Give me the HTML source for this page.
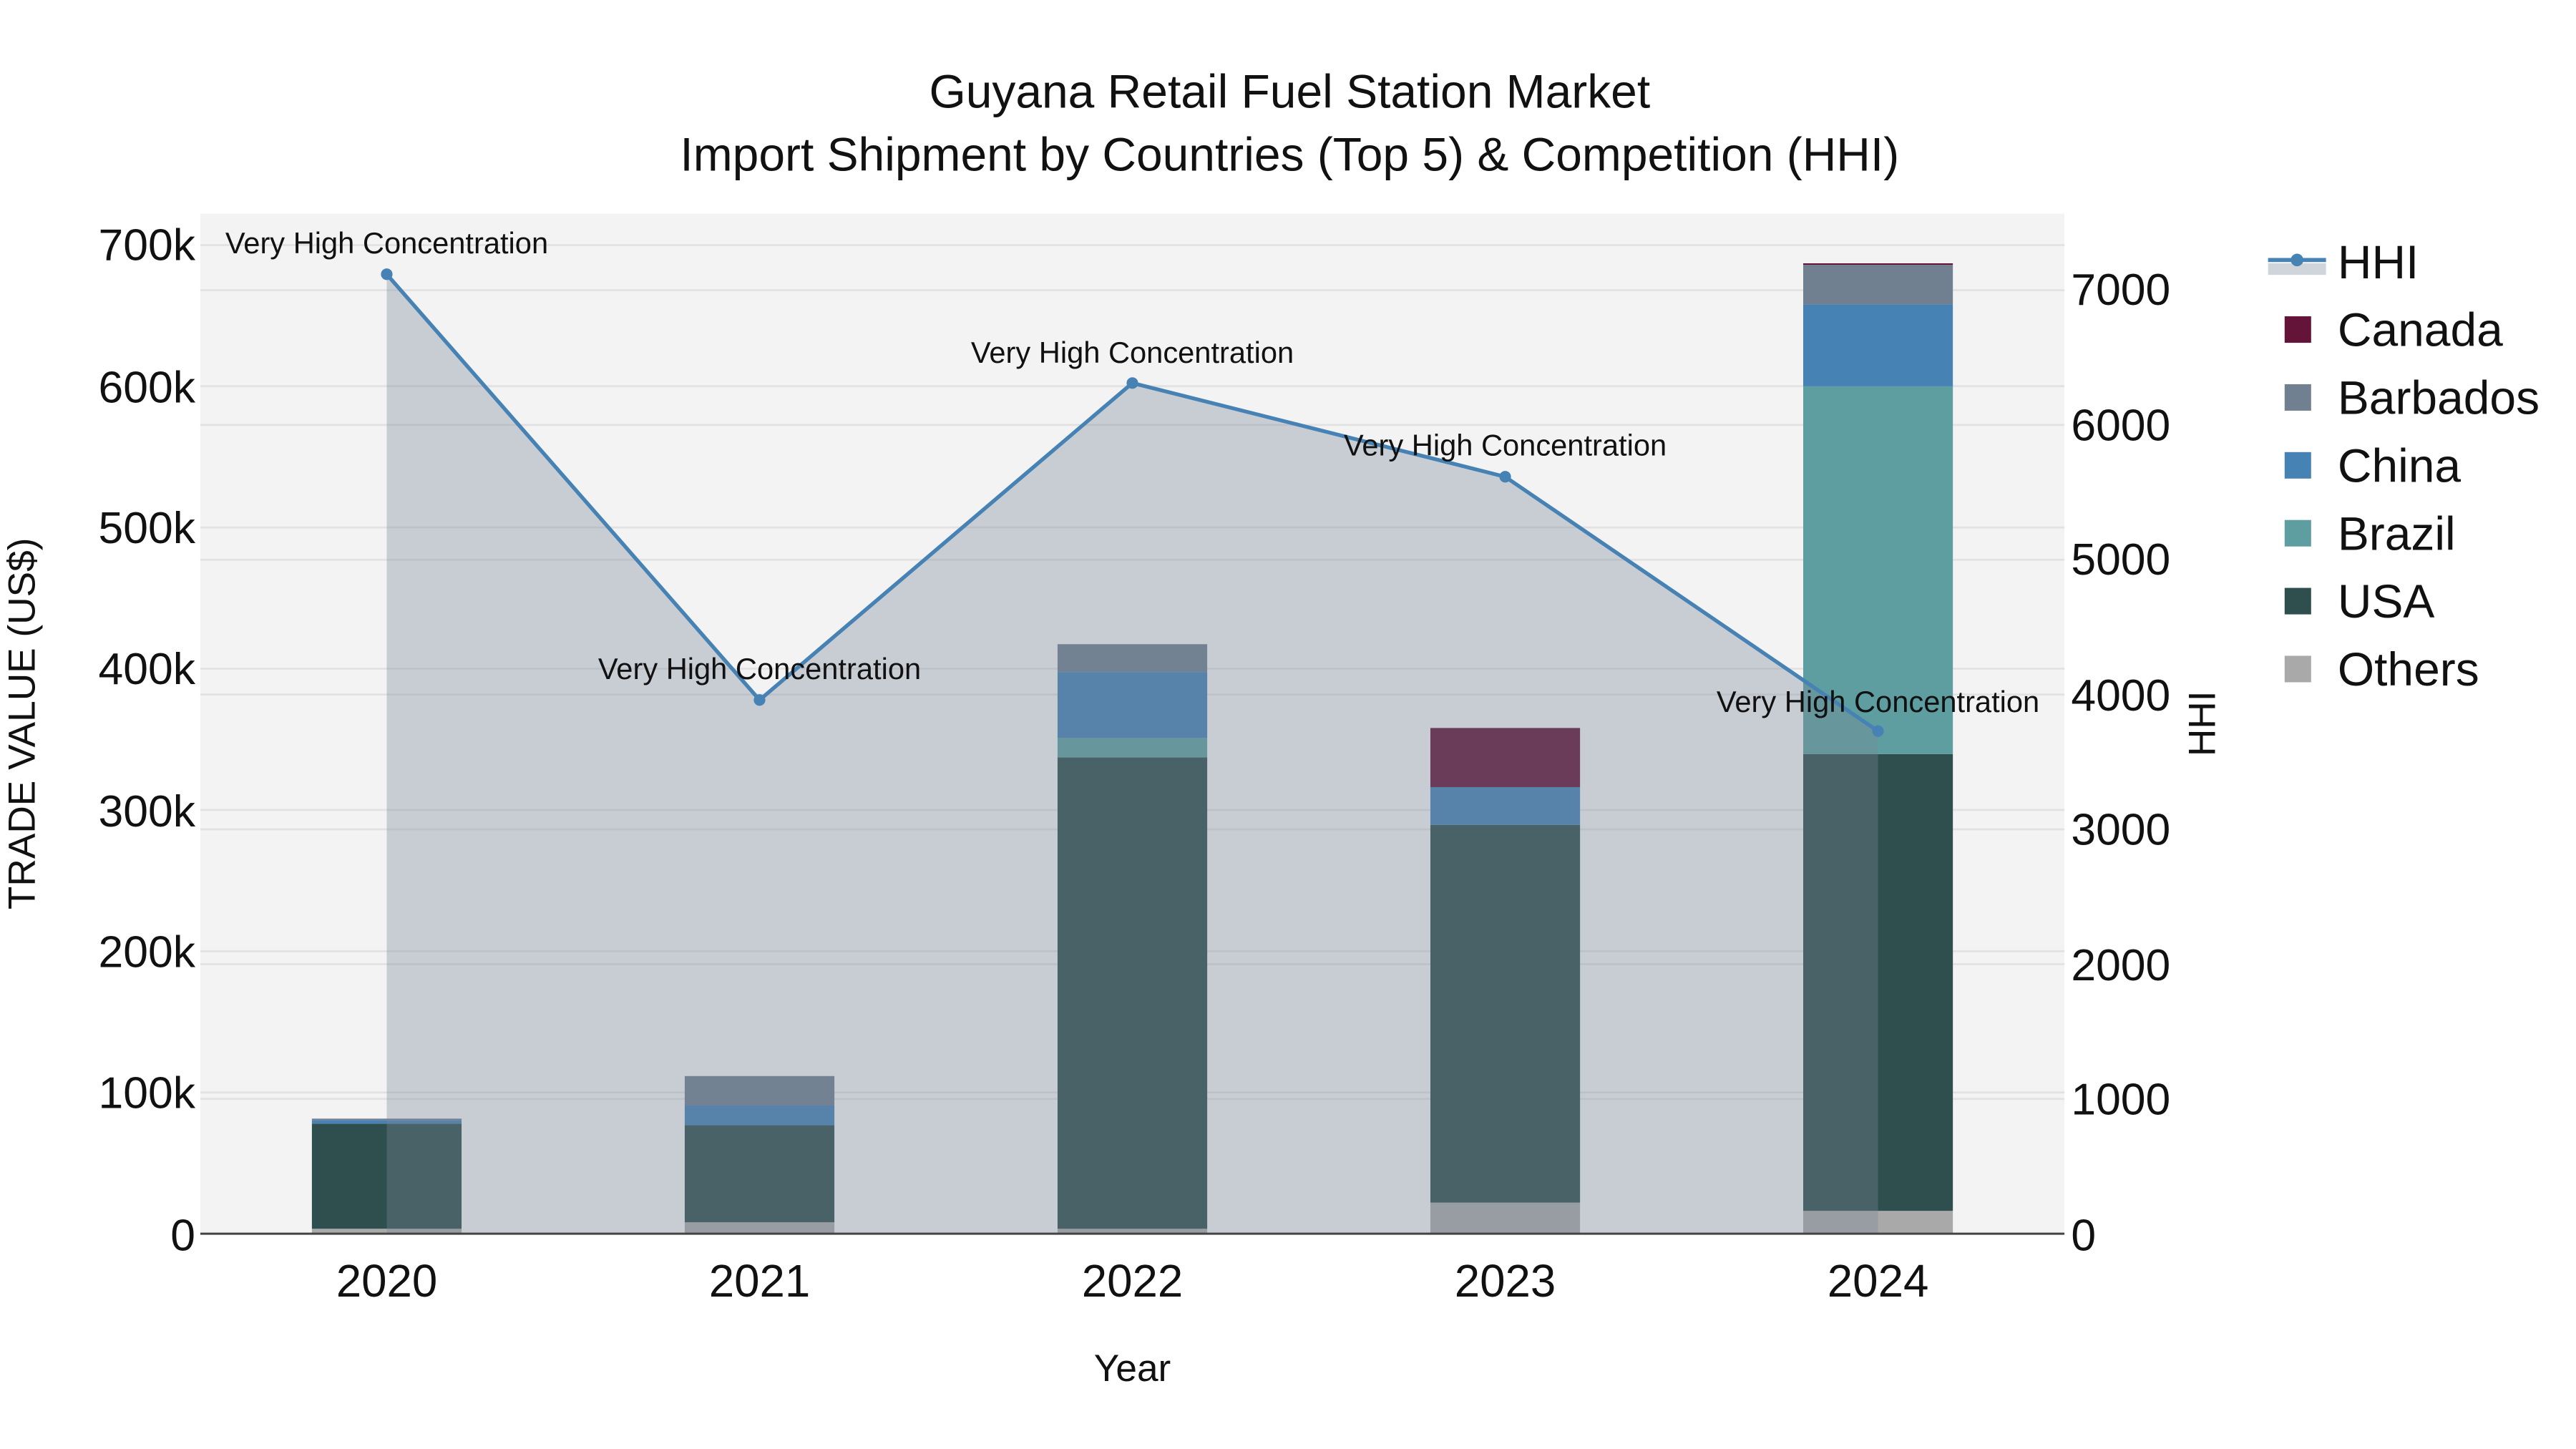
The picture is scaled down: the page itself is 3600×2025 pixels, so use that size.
<!DOCTYPE html>
<html><head><meta charset="utf-8"><style>
html,body{margin:0;padding:0;background:#fff;}
svg{display:block;}
text{font-family:"Liberation Sans",Arial,sans-serif;fill:#111;}
</style></head><body>
<svg width="3600" height="2025" viewBox="0 0 1556 875" preserveAspectRatio="none" xmlns="http://www.w3.org/2000/svg">
<rect x="0" y="0" width="1556" height="875" fill="#fff"/>
<rect x="121" y="129" width="1126" height="616" fill="#f3f3f3"/>
<g stroke="#e2e2e2" stroke-width="1.2">
<line x1="121" x2="1247" y1="659.7" y2="659.7"/><line x1="121" x2="1247" y1="574.4" y2="574.4"/>
<line x1="121" x2="1247" y1="489.1" y2="489.1"/><line x1="121" x2="1247" y1="403.8" y2="403.8"/>
<line x1="121" x2="1247" y1="318.5" y2="318.5"/><line x1="121" x2="1247" y1="233.2" y2="233.2"/>
<line x1="121" x2="1247" y1="148" y2="148"/>
<line x1="121" x2="1247" y1="663.6" y2="663.6"/><line x1="121" x2="1247" y1="582.2" y2="582.2"/>
<line x1="121" x2="1247" y1="500.8" y2="500.8"/><line x1="121" x2="1247" y1="419.4" y2="419.4"/>
<line x1="121" x2="1247" y1="338" y2="338"/><line x1="121" x2="1247" y1="256.6" y2="256.6"/>
<line x1="121" x2="1247" y1="175.2" y2="175.2"/>
</g>
<g>
<rect x="188.4" y="742" width="90.4" height="3" fill="#a9a9a9"/>
<rect x="188.4" y="678.5" width="90.4" height="63.5" fill="#2f4f4f"/>
<rect x="188.4" y="676.5" width="90.4" height="2" fill="#4682b4"/>
<rect x="188.4" y="675.5" width="90.4" height="1" fill="#708090"/>
<rect x="413.6" y="738.1" width="90.4" height="6.9" fill="#a9a9a9"/>
<rect x="413.6" y="679.5" width="90.4" height="58.6" fill="#2f4f4f"/>
<rect x="413.6" y="667.6" width="90.4" height="11.9" fill="#4682b4"/>
<rect x="413.6" y="649.8" width="90.4" height="17.8" fill="#708090"/>
<rect x="638.8" y="742" width="90.4" height="3" fill="#a9a9a9"/>
<rect x="638.8" y="457.4" width="90.4" height="284.6" fill="#2f4f4f"/>
<rect x="638.8" y="445.5" width="90.4" height="11.9" fill="#5f9ea0"/>
<rect x="638.8" y="405.8" width="90.4" height="39.7" fill="#4682b4"/>
<rect x="638.8" y="389" width="90.4" height="16.8" fill="#708090"/>
<rect x="864" y="726.2" width="90.4" height="18.8" fill="#a9a9a9"/>
<rect x="864" y="498.1" width="90.4" height="228.1" fill="#2f4f4f"/>
<rect x="864" y="475.3" width="90.4" height="22.8" fill="#4682b4"/>
<rect x="864" y="439.6" width="90.4" height="35.7" fill="#641438"/>
<rect x="1089.2" y="731.2" width="90.4" height="13.8" fill="#a9a9a9"/>
<rect x="1089.2" y="455.4" width="90.4" height="275.8" fill="#2f4f4f"/>
<rect x="1089.2" y="233.3" width="90.4" height="222.1" fill="#5f9ea0"/>
<rect x="1089.2" y="183.7" width="90.4" height="49.6" fill="#4682b4"/>
<rect x="1089.2" y="159.9" width="90.4" height="23.8" fill="#708090"/>
<rect x="1089.2" y="159" width="90.4" height="0.9" fill="#641438"/>
</g>
<polygon points="233.6,165.6 458.8,422.7 684,231.3 909.2,287.9 1134.4,441.5 1134.4,745 233.6,745" fill="rgb(119,136,153)" fill-opacity="0.35"/>
<line x1="121" x2="1247" y1="745" y2="745" stroke="#444" stroke-width="1.3"/>
<polyline points="233.6,165.6 458.8,422.7 684,231.3 909.2,287.9 1134.4,441.5" fill="none" stroke="#4682b4" stroke-width="2.3"/>
<g fill="#4682b4">
<circle cx="233.6" cy="165.6" r="3.5"/><circle cx="458.8" cy="422.7" r="3.5"/><circle cx="684" cy="231.3" r="3.5"/><circle cx="909.2" cy="287.9" r="3.5"/><circle cx="1134.4" cy="441.5" r="3.5"/>
</g>
<g font-size="18" text-anchor="middle">
<text x="233.6" y="153">Very High Concentration</text>
<text x="458.8" y="410">Very High Concentration</text>
<text x="684" y="219">Very High Concentration</text>
<text x="909.2" y="275">Very High Concentration</text>
<text x="1134.4" y="430">Very High Concentration</text>
</g>
<g font-size="28.5" text-anchor="middle">
<text x="779" y="65">Guyana Retail Fuel Station Market</text>
<text x="779" y="103">Import Shipment by Countries (Top 5) &amp; Competition (HHI)</text>
</g>
<g font-size="27" text-anchor="end">
<text x="118" y="755">0</text><text x="118" y="669">100k</text><text x="118" y="584">200k</text>
<text x="118" y="499">300k</text><text x="118" y="413">400k</text><text x="118" y="328">500k</text>
<text x="118" y="243">600k</text><text x="118" y="157">700k</text>
</g>
<g font-size="27" text-anchor="start">
<text x="1251" y="755">0</text><text x="1251" y="673">1000</text><text x="1251" y="592">2000</text>
<text x="1251" y="510">3000</text><text x="1251" y="429">4000</text><text x="1251" y="347">5000</text>
<text x="1251" y="266">6000</text><text x="1251" y="184">7000</text>
</g>
<g font-size="27.5" text-anchor="middle">
<text x="233.6" y="783">2020</text><text x="458.8" y="783">2021</text><text x="684" y="783">2022</text>
<text x="909.2" y="783">2023</text><text x="1134.4" y="783">2024</text>
</g>
<text x="684" y="834" font-size="23" text-anchor="middle">Year</text>
<text transform="translate(21,437) rotate(-90)" font-size="23" text-anchor="middle">TRADE VALUE (US$)</text>
<text transform="translate(1338,437) rotate(-90)" font-size="23" text-anchor="middle">HHI</text>
<rect x="1370" y="159" width="35" height="7" fill="#d0d5db"/>
<line x1="1370" x2="1405" y1="157" y2="157" stroke="#4682b4" stroke-width="2.5"/>
<circle cx="1387.5" cy="157" r="3.8" fill="#4682b4"/>
<rect x="1380" y="191" width="16" height="16" fill="#641438"/>
<rect x="1380" y="232" width="16" height="16" fill="#708090"/>
<rect x="1380" y="273" width="16" height="16" fill="#4682b4"/>
<rect x="1380" y="314" width="16" height="16" fill="#5f9ea0"/>
<rect x="1380" y="355" width="16" height="16" fill="#2f4f4f"/>
<rect x="1380" y="396" width="16" height="16" fill="#a9a9a9"/>
<g font-size="28.5">
<text x="1412" y="168">HHI</text><text x="1412" y="209">Canada</text><text x="1412" y="250">Barbados</text>
<text x="1412" y="291">China</text><text x="1412" y="332">Brazil</text><text x="1412" y="373">USA</text>
<text x="1412" y="414">Others</text>
</g>
</svg>
</body></html>
